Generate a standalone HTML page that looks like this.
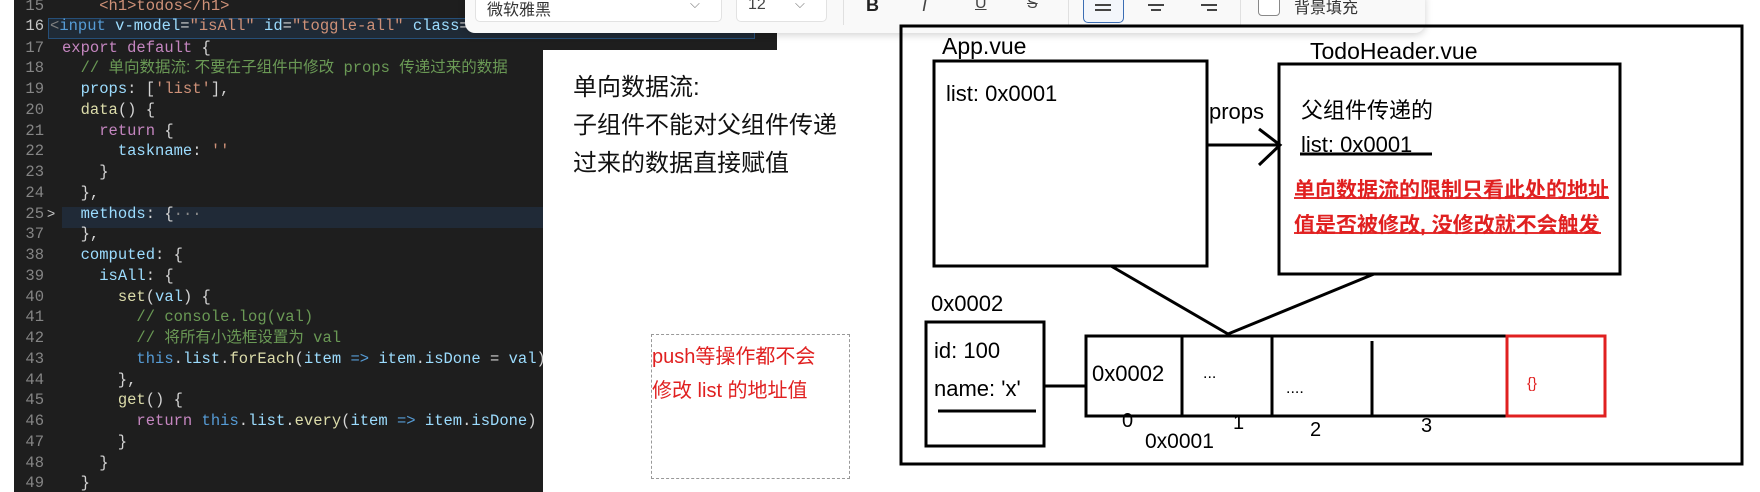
<!DOCTYPE html>
<html><head><meta charset="utf-8"><style>
*{margin:0;padding:0;box-sizing:border-box}
body{width:1760px;height:492px;background:#fff;position:relative;overflow:hidden;font-family:"Liberation Sans","Noto Sans CJK SC",sans-serif}
.a{position:absolute;white-space:pre}
#code{position:absolute;left:14px;top:0;width:529px;height:492px;background:#1e1e1e;overflow:hidden}
#codetop{position:absolute;left:14px;top:0;width:763px;height:50px;background:#1e1e1e}
.ln{position:absolute;left:0;width:30px;text-align:right;color:#858585;font:15.5px "Liberation Mono","Noto Sans CJK SC",monospace}
.cl{position:absolute;left:48px;color:#d4d4d4;font:15.5px "Liberation Mono","Noto Sans CJK SC",monospace;white-space:pre}
.k{color:#c586c0}.v{color:#9cdcfe}.s{color:#ce9178}.c{color:#6a9955}.f{color:#dcdcaa}.b{color:#569cd6}
.cjk{font-family:"Liberation Sans","Noto Sans CJK SC",sans-serif}
</style></head><body>
<div id="codetop"></div>
<div id="code"><div style="position:absolute;left:48px;top:207px;width:481px;height:21px;background:#202a37"></div><div id="lines"></div></div>
<div style="position:absolute;left:48px;top:18px;width:707px;height:21px;border:1px solid #264f78;background:#1f2a36"></div>
<div id="l16" style="position:absolute;left:50px;top:16.75px;line-height:20px;font:15.5px 'Liberation Mono',monospace;color:#d4d4d4;white-space:pre"><span style='color:#808080'>&lt;</span><span class=b>input</span> <span class=v>v-model</span>=<span class=s>"isAll"</span> <span class=v>id</span>=<span class=s>"toggle-all"</span> <span class=v>class</span>=</div>
<div class="a" style="left:14px;top:16.75px;width:30px;text-align:right;line-height:20px;font:15.5px 'Liberation Mono',monospace;color:#c6c6c6">16</div>
<script>
var L=[
["15","    <span class=\"s\">&lt;h1&gt;todos&lt;/h1&gt;</span>"],
["",""],
["17","<span class=k>export default</span> {"],
["18","  <span class=c>// <span class=cjk>单向数据流: 不要在子组件中修改</span> props <span class=cjk>传递过来的数据</span></span>"],
["19","  <span class=v>props</span>: [<span class=s>'list'</span>],"],
["20","  <span class=f>data</span>() {"],
["21","    <span class=k>return</span> {"],
["22","      <span class=v>taskname</span>: <span class=s>''</span>"],
["23","    }"],
["24","  },"],
["25","  <span class=v>methods</span>: {<span style='color:#888'>···</span>"],
["37","  },"],
["38","  <span class=v>computed</span>: {"],
["39","    <span class=v>isAll</span>: {"],
["40","      <span class=f>set</span>(<span class=v>val</span>) {"],
["41","        <span class=c>// console.log(val)</span>"],
["42","        <span class=c>// <span class=cjk>将所有小选框设置为</span> val</span>"],
["43","        <span class=b>this</span>.<span class=v>list</span>.<span class=f>forEach</span>(<span class=v>item</span> <span class=b>=&gt;</span> <span class=v>item</span>.<span class=v>isDone</span> = <span class=v>val</span>)"],
["44","      },"],
["45","      <span class=f>get</span>() {"],
["46","        <span class=k>return</span> <span class=b>this</span>.<span class=v>list</span>.<span class=f>every</span>(<span class=v>item</span> <span class=b>=&gt;</span> <span class=v>item</span>.<span class=v>isDone</span>)"],
["47","      }"],
["48","    }"],
["49","  }"]];
var h="";
for(var i=0;i<L.length;i++){var t=i*20.75-4;
h+="<div class=ln style='top:"+t+"px;line-height:20px'>"+L[i][0]+"</div>";
h+="<div class=cl style='top:"+t+"px;line-height:20px'>"+L[i][1]+"</div>";}
h+="<div class=a style='left:33px;top:205px;color:#c5c5c5;font:14px Liberation Sans'>&gt;</div>";
document.getElementById("lines").innerHTML=h;
</script>
<!-- toolbar -->
<div style="position:absolute;left:465px;top:-10px;width:960px;height:43px;background:#f9f9f9;border-radius:10px;box-shadow:0 2px 8px rgba(0,0,0,.18)"></div>
<div style="position:absolute;left:475px;top:-6px;width:247px;height:28px;background:#fff;border:1px solid #e2e2e2;border-radius:5px"></div>
<div class="a" style="left:487px;top:-4px;font-size:16px;color:#333">微软雅黑</div>
<div class="a" style="left:690px;top:-4px;font-size:13px;color:#777">⌵</div>
<div style="position:absolute;left:736px;top:-6px;width:91px;height:28px;background:#fff;border:1px solid #e2e2e2;border-radius:5px"></div>
<div class="a" style="left:748px;top:-4px;font-size:16px;color:#444">12</div>
<div class="a" style="left:795px;top:-4px;font-size:13px;color:#777">⌵</div>
<div style="position:absolute;left:843px;top:0;width:1px;height:25px;background:#e0e0e0"></div>
<div class="a" style="left:866px;top:-5px;font-size:18px;font-weight:bold;color:#222">B</div>
<div class="a" style="left:922px;top:-5px;font-size:18px;font-style:italic;color:#444">I</div>
<div class="a" style="left:975px;top:-5px;font-size:16px;text-decoration:underline;color:#444">U</div>
<div class="a" style="left:1027px;top:-5px;font-size:16px;text-decoration:line-through;color:#444">S</div>
<div style="position:absolute;left:1068px;top:0;width:1px;height:25px;background:#e0e0e0"></div>
<div style="position:absolute;left:1083px;top:-6px;width:41px;height:29px;border:1.5px solid #3b6db3;border-radius:5px;background:#f3f6fb"></div>
<div style="position:absolute;left:1095px;top:4px;width:16px;height:2px;background:#444;box-shadow:0 5px 0 #444"></div>
<div style="position:absolute;left:1148px;top:4px;width:16px;height:2px;background:#444"></div><div style="position:absolute;left:1151px;top:9px;width:10px;height:2px;background:#444"></div>
<div style="position:absolute;left:1201px;top:4px;width:16px;height:2px;background:#444"></div><div style="position:absolute;left:1207px;top:9px;width:10px;height:2px;background:#444"></div>
<div style="position:absolute;left:1240px;top:0;width:1px;height:25px;background:#e0e0e0"></div>
<div style="position:absolute;left:1258px;top:-6px;width:22px;height:22px;border:1.5px solid #888;border-radius:4px;background:#fff"></div>
<div class="a" style="left:1294px;top:-6px;font-size:16px;color:#333">背景填充</div>
<!-- text on white -->
<div class="a" style="left:573px;top:73px;font-size:24px;line-height:30px;color:#111">单向数据流:</div>
<div class="a" style="left:573px;top:111px;font-size:24px;line-height:30px;color:#111">子组件不能对父组件传递</div>
<div class="a" style="left:573px;top:149px;font-size:24px;line-height:30px;color:#111">过来的数据直接赋值</div>
<div style="position:absolute;left:651px;top:334px;width:199px;height:145px;border:1px dashed #999"></div>
<div class="a" style="left:652px;top:340px;font-size:20px;color:#e02020">push等操作都不会</div>
<div class="a" style="left:652px;top:374px;font-size:20px;color:#e02020">修改 list 的地址值</div>
<!-- diagram -->
<svg style="position:absolute;left:0;top:0" width="1760" height="492">
<g fill="none" stroke="#000" stroke-width="3">
<rect x="901" y="26" width="841" height="438"/>
<rect x="934" y="61" width="273" height="205"/>
<rect x="1279" y="64" width="341" height="210"/>
<path d="M1207 145H1279M1259 129L1280 145L1259 165"/>
<path d="M1111 266L1228 334L1374 274"/>
<rect x="926" y="322" width="118" height="124"/>
<path d="M1044 386H1086"/>
<path d="M1086 336H1507V416H1086Z" />
<path d="M1182 336V416M1272 336V416M1372 341V416"/>
<path d="M938 411H1036"/>
<path d="M1300 154H1432"/>
</g>
<rect x="1507" y="336" width="98" height="80" fill="none" stroke="#e02020" stroke-width="3"/>
<path d="M1294 198H1609M1294 233H1601" stroke="#e53030" stroke-width="2"/>
</svg>
<div class="a" style="left:942px;top:33px;font-size:23px">App.vue</div>
<div class="a" style="left:946px;top:81px;font-size:22px">list: 0x0001</div>
<div class="a" style="left:1310px;top:38px;font-size:23px">TodoHeader.vue</div>
<div class="a" style="left:1209px;top:99px;font-size:22px">props</div>
<div class="a" style="left:1301px;top:93px;font-size:22px">父组件传递的</div>
<div class="a" style="left:1301px;top:132px;font-size:22px">list: 0x0001</div>
<div class="a" style="left:1294px;top:174px;font-size:21px;font-weight:bold;color:#e02020">单向数据流的限制只看此处的地址</div>
<div class="a" style="left:1294px;top:209px;font-size:21px;font-weight:bold;color:#e02020">值是否被修改, 没修改就不会触发</div>
<div class="a" style="left:931px;top:291px;font-size:22px">0x0002</div>
<div class="a" style="left:934px;top:338px;font-size:22px">id: 100</div>
<div class="a" style="left:934px;top:376px;font-size:22px">name: 'x'</div>
<div class="a" style="left:1092px;top:361px;font-size:22px">0x0002</div>
<div class="a" style="left:1203px;top:365px;font-size:16px">...</div>
<div class="a" style="left:1286px;top:380px;font-size:16px">....</div>
<div class="a" style="left:1527px;top:375px;font-size:15px;color:#e02020">{}</div>
<div class="a" style="left:1122px;top:410px;font-size:20px">0</div>
<div class="a" style="left:1233px;top:412px;font-size:20px">1</div>
<div class="a" style="left:1310px;top:419px;font-size:20px">2</div>
<div class="a" style="left:1421px;top:415px;font-size:20px">3</div>
<div class="a" style="left:1145px;top:430px;font-size:21px">0x0001</div>
</body></html>
